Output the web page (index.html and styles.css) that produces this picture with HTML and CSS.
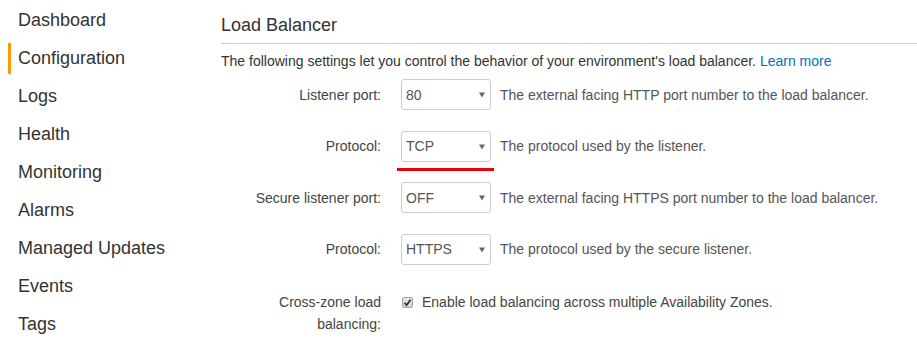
FILE: index.html
```html
<!DOCTYPE html>
<html lang="en">
<head>
<meta charset="utf-8">
<title>Load Balancer</title>
<link rel="stylesheet" href="styles.css">
</head>
<body>
<div class="page">
  <nav class="sidebar">
    <a class="nav-item">Dashboard</a>
    <a class="nav-item active">Configuration</a>
    <a class="nav-item">Logs</a>
    <a class="nav-item">Health</a>
    <a class="nav-item">Monitoring</a>
    <a class="nav-item">Alarms</a>
    <a class="nav-item">Managed Updates</a>
    <a class="nav-item">Events</a>
    <a class="nav-item">Tags</a>
  </nav>
  <main class="content">
    <h2 class="title">Load Balancer</h2>
    <p class="intro">The following settings let you control the behavior of your environment's load balancer. <a class="link">Learn more</a></p>
    <div class="form">
      <div class="row">
        <label class="label">Listener port:</label>
        <div class="select-wrap">
          <select class="select"><option>80</option></select>
          <svg class="arrow" width="6" height="6" viewBox="0 0 6 6"><path d="M0 0.5H6L3 5.5Z" fill="#666"/></svg>
        </div>
        <span class="help">The external facing HTTP port number to the load balancer.</span>
      </div>
      <div class="row">
        <label class="label">Protocol:</label>
        <div class="select-wrap">
          <select class="select"><option>TCP</option></select>
          <svg class="arrow" width="6" height="6" viewBox="0 0 6 6"><path d="M0 0.5H6L3 5.5Z" fill="#666"/></svg>
          <span class="underline"></span>
        </div>
        <span class="help">The protocol used by the listener.</span>
      </div>
      <div class="row">
        <label class="label">Secure listener port:</label>
        <div class="select-wrap">
          <select class="select"><option>OFF</option></select>
          <svg class="arrow" width="6" height="6" viewBox="0 0 6 6"><path d="M0 0.5H6L3 5.5Z" fill="#666"/></svg>
        </div>
        <span class="help">The external facing HTTPS port number to the load balancer.</span>
      </div>
      <div class="row">
        <label class="label">Protocol:</label>
        <div class="select-wrap">
          <select class="select"><option>HTTPS</option></select>
          <svg class="arrow" width="6" height="6" viewBox="0 0 6 6"><path d="M0 0.5H6L3 5.5Z" fill="#666"/></svg>
        </div>
        <span class="help">The protocol used by the secure listener.</span>
      </div>
      <div class="row row-check">
        <label class="label label-multi">Cross-zone load balancing:</label>
        <div class="check-line">
          <span class="checkbox"><svg width="9" height="9" viewBox="0 0 9 9"><path d="M1.5 4.8L3.6 7L7.6 1.8" fill="none" stroke="#333" stroke-width="1.8"/></svg></span>
          <span class="check-text">Enable load balancing across multiple Availability Zones.</span>
        </div>
      </div>
    </div>
  </main>
</div>
</body>
</html>
```
FILE: styles.css
```css
* { box-sizing: border-box; }
html, body { margin: 0; padding: 0; background: #fff; }
body {
  font-family: "Liberation Sans", Arial, sans-serif;
  color: #333;
  width: 917px;
  height: 346px;
  overflow: hidden;
}
.page { display: flex; }
.sidebar {
  width: 221px;
  flex: none;
  display: flex;
  flex-direction: column;
  gap: 7px;
  padding: 4.5px 0 0 8px;
}
.nav-item {
  display: block;
  font-size: 18px;
  line-height: 31px;
  color: #333;
  border-left: 3px solid transparent;
  padding-left: 7px;
  white-space: nowrap;
}
.nav-item.active { border-left-color: #ff9900; }
.content { flex: 1; min-width: 0; }
.title {
  margin: 14px 0 0;
  font-size: 18px;
  font-weight: normal;
  line-height: 22px;
  padding-bottom: 7px;
  border-bottom: 1px solid #cccccc;
  color: #333;
}
.intro {
  margin: 7px 0 0;
  font-size: 14px;
  line-height: 20px;
  color: #333;
}
.link { color: #0073bb; }
.form {
  margin-top: 8px;
  display: flex;
  flex-direction: column;
  gap: 20.5px;
}
.row {
  display: flex;
  align-items: center;
  font-size: 14px;
}
.label {
  width: 160px;
  flex: none;
  text-align: right;
  margin-right: 20px;
  color: #444;
  line-height: 22px;
}
.select-wrap {
  position: relative;
  width: 90px;
  height: 31px;
  flex: none;
  margin-right: 9px;
}
.select {
  appearance: none;
  -webkit-appearance: none;
  width: 100%;
  height: 100%;
  margin: 0;
  border: 1px solid #cccccc;
  border-radius: 3px;
  background: #fff;
  padding: 0 0 0 4px;
  font-family: "Liberation Sans", Arial, sans-serif;
  font-size: 14px;
  color: #555;
}
.arrow {
  position: absolute;
  right: 6px;
  top: 13px;
  pointer-events: none;
}
.underline {
  position: absolute;
  left: -4px;
  top: 37px;
  width: 97px;
  height: 3px;
  background: #e8000b;
}
.help { color: #555; white-space: nowrap; }
.row-check {
  align-items: flex-start;
  margin-top: 6px;
}
.check-line {
  display: flex;
  align-items: center;
  height: 22px;
}
.checkbox {
  width: 11px;
  height: 11px;
  margin-left: 1px;
  border: 1px solid #a0a0a0;
  border-radius: 2px;
  background: linear-gradient(#e6e6e6, #d4d4d4);
  display: flex;
  align-items: center;
  justify-content: center;
  margin-right: 9px;
}
.checkbox svg { display: block; }
.check-text { color: #444; white-space: nowrap; }
```
